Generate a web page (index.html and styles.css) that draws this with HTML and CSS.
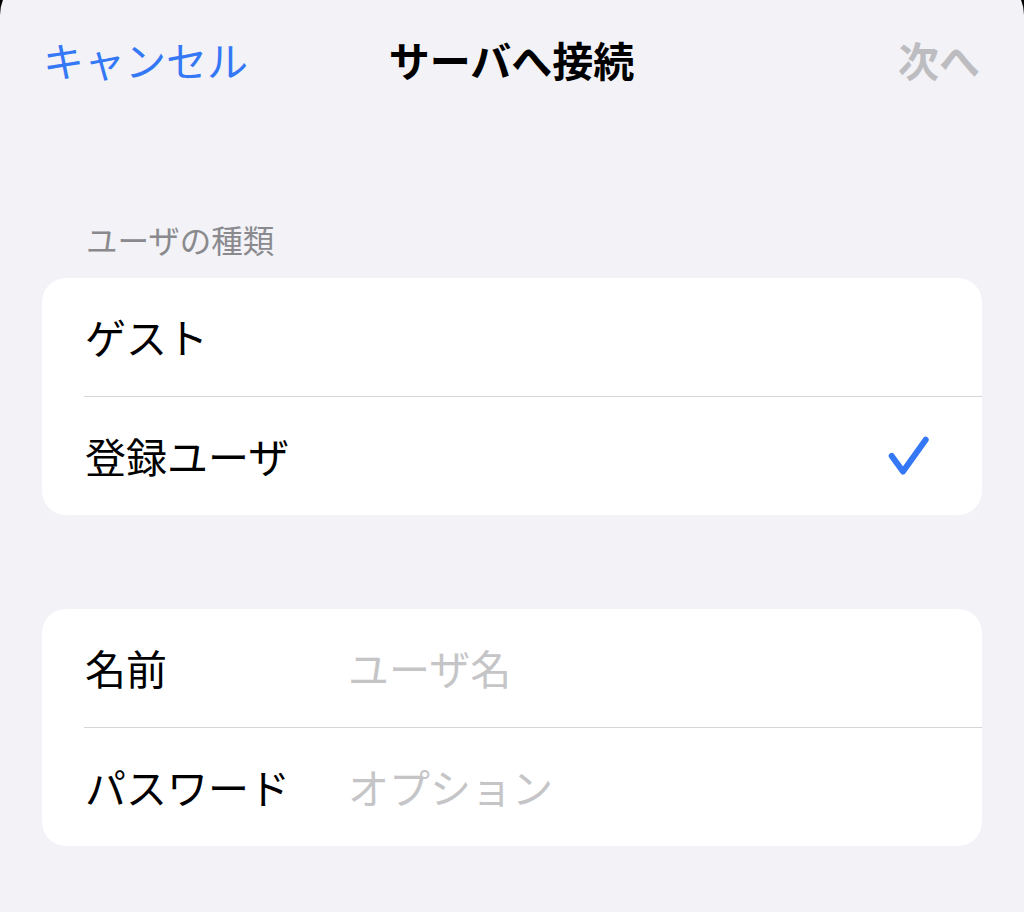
FILE: index.html
```html
<!doctype html>
<html lang="ja">
<head>
	<meta charset="utf-8" />
	<title>サーバへ接続</title>
	<link rel="stylesheet" href="styles.css">
</head>
<body>
<div class="sheet">
	<div class="nav">
		<span class="nav-cancel">キャンセル</span>
		<span class="nav-title">サーバへ接続</span>
		<span class="nav-next">次へ</span>
	</div>

	<div class="section-head">ユーザの種類</div>
	<ul class="group">
		<li class="row"><span class="row-label">ゲスト</span></li>
		<li class="row">
			<span class="row-label">登録ユーザ</span>
			<svg class="check" width="46" height="42" viewBox="0 0 46 42">
				<path d="M5.7 21 L17 36.5 L39.7 4.7" fill="none" stroke="#3478f6" stroke-width="6" stroke-linecap="round" stroke-linejoin="round"/>
			</svg>
		</li>
	</ul>

	<ul class="group group-login">
		<li class="row">
			<span class="row-label field-label">名前</span>
			<span class="placeholder">ユーザ名</span>
		</li>
		<li class="row">
			<span class="row-label field-label">パスワード</span>
			<span class="placeholder">オプション</span>
		</li>
	</ul>
</div>
</body>
</html>
```

FILE: styles.css
```css
body,ul,li{margin:0;padding:0;list-style:none;}
html,body{background:#000;height:100%;}
body{font-family:"Noto Sans CJK JP","Noto Sans",sans-serif;color:#000;overflow:hidden;}

/* sheet with rounded top corners, pulled up a little */
.sheet{background:#f2f2f7;margin-top:-25px;padding-top:25px;min-height:100%;border-radius:40px 40px 0 0;}

.nav{height:120px;display:grid;grid-template-columns:1fr auto 1fr;align-items:center;padding:0 44px 0 43px;font-size:41px;line-height:1.2;}
.nav-cancel{color:#3478f6;}
.nav-title{font-weight:700;}
.nav-next{color:#bdbdc1;font-weight:700;justify-self:end;}

.section-head{margin:101px 0 20px;padding-left:86px;font-size:31.5px;line-height:37px;color:#8a8a8e;}

.group{background:#fff;margin:0 42px;border-radius:24px;padding-left:42px;}
.group-login{margin-top:94px;}
.row{height:118px;display:flex;align-items:center;justify-content:space-between;padding-right:50px;font-size:41px;line-height:1.2;}
.row + .row{border-top:1px solid #d6d6da;}
.row-label{padding-left:1px;}

.group-login .row{justify-content:flex-start;}
.field-label{width:263px;}
.placeholder{color:#c5c5c7;}
```
